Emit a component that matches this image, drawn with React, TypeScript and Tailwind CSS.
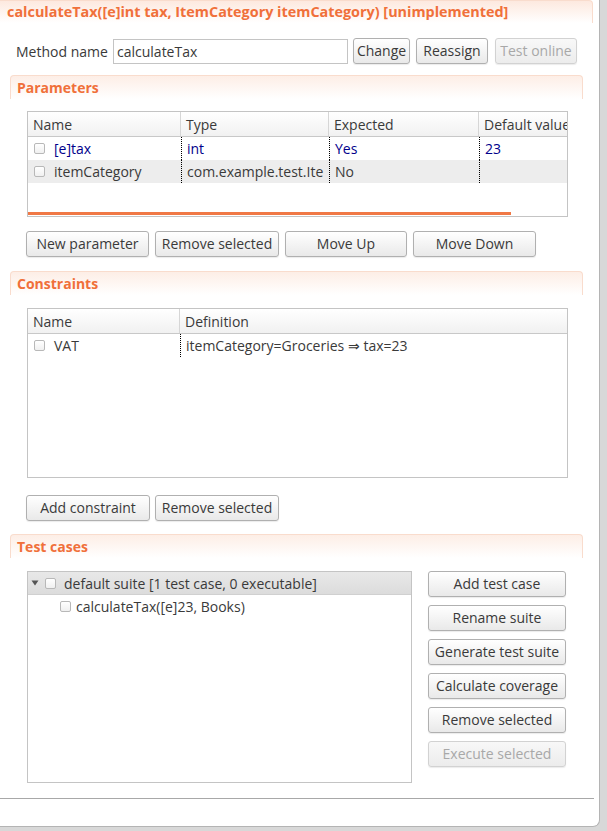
import React from "react";

const FONT = { fontFamily: '"Open Sans", "Noto Sans", sans-serif' };

function Btn({ children, w, disabled }: { children: React.ReactNode; w: string; disabled?: boolean }) {
  return (
    <div
      className={`${w} h-[26px] flex items-center justify-center rounded-[3px] border text-[14px] leading-none whitespace-nowrap shadow-[0_1px_1px_rgba(0,0,0,0.08)] ${
        disabled
          ? "border-[#d2d2d2] text-[#a8a8a8] bg-gradient-to-b from-[#f8f8f8] to-[#ececec]"
          : "border-[#b0b0b0] text-[#3a3a3a] bg-gradient-to-b from-white to-[#e9e9e9]"
      }`}
    >
      {children}
    </div>
  );
}

function SectionHeader({ title }: { title: string }) {
  return (
    <div className="h-[24px] rounded-t-[4px] border-t border-l border-r border-[#f9dccd] bg-gradient-to-b from-[#fdeee6] to-white flex items-center pl-[6px] text-[14px] font-bold text-[#f0703a]">
      {title}
    </div>
  );
}

function Check() {
  return <div className="w-[11px] h-[11px] rounded-[2px] border border-[#b8b8b8] bg-gradient-to-b from-white to-[#f0f0f0] shrink-0" />;
}

function HeadCell({ children, w, last }: { children: React.ReactNode; w: string; last?: boolean }) {
  return (
    <div className={`${w} shrink-0 h-full flex items-center pl-[5px] ${last ? "" : "border-r border-[#d6d6d6]"} overflow-hidden whitespace-nowrap`}>
      {children}
    </div>
  );
}

function Cell({ children, w, sep, cls }: { children?: React.ReactNode; w: string; sep?: boolean; cls?: string }) {
  return (
    <div className={`${w} shrink-0 h-full flex items-center overflow-hidden whitespace-nowrap ${sep ? "border-l border-dotted border-black pl-[5px]" : ""} ${cls ?? ""}`}>
      {children}
    </div>
  );
}

export default function App() {
  return (
    <div className="w-[607px] h-[831px] bg-[#d8d8d8] text-[14px] text-[#3a3a3a]" style={FONT}>
      <div className="w-[600px] h-[827px] bg-white border-r border-b border-[#b4b4b4] rounded-br-[7px] flex flex-col">
        {/* Title */}
        <div className="w-[593px] h-[23px] rounded-tr-[4px] border-t border-r border-[#f9dccd] bg-gradient-to-b from-[#fde9df] to-white flex items-center pl-[7px] text-[14.4px] font-bold text-[#f0703a] whitespace-nowrap">
          calculateTax([e]int tax, ItemCategory itemCategory) [unimplemented]
        </div>

        {/* Method name row */}
        <div className="mt-[15px] h-[26px] flex items-center pl-[16px]">
          <span className="w-[97px] shrink-0">Method name</span>
          <div className="w-[235px] h-[25px] border border-[#c4c4c4] flex items-center pl-[3px] bg-white">calculateTax</div>
          <div className="ml-[5px]"><Btn w="w-[57px]">Change</Btn></div>
          <div className="ml-[6px]"><Btn w="w-[72px]">Reassign</Btn></div>
          <div className="ml-[7px]"><Btn w="w-[82px]" disabled>Test online</Btn></div>
        </div>

        {/* Parameters */}
        <div className="ml-[10px] w-[573px] mt-[11px]">
          <SectionHeader title="Parameters" />
        </div>
        <div className="ml-[27px] mt-[12px] w-[541px] h-[106px] border border-[#c4c4c4] flex flex-col relative">
          <div className="h-[25px] flex border-b border-[#c8c8c8] bg-gradient-to-b from-white to-[#f1f1f1]">
            <HeadCell w="w-[153px]">Name</HeadCell>
            <HeadCell w="w-[148px]">Type</HeadCell>
            <HeadCell w="w-[150px]">Expected</HeadCell>
            <HeadCell w="w-[88px]" last>Default value</HeadCell>
          </div>
          <div className="h-[23px] flex text-[#00008b]">
            <Cell w="w-[153px]" cls="pl-[6px] gap-[9px]"><Check />[e]tax</Cell>
            <Cell w="w-[148px]" sep>int</Cell>
            <Cell w="w-[150px]" sep>Yes</Cell>
            <Cell w="w-[88px]" sep>23</Cell>
          </div>
          <div className="h-[23px] flex bg-[#ededed]">
            <Cell w="w-[153px]" cls="pl-[6px] gap-[9px]"><Check />itemCategory</Cell>
            <Cell w="w-[148px]" sep>com.example.test.Ite</Cell>
            <Cell w="w-[150px]" sep>No</Cell>
            <Cell w="w-[88px]" sep></Cell>
          </div>
          <div className="absolute left-0 bottom-[1px] w-[483px] h-[3px] bg-[#f07845]" />
        </div>
        <div className="ml-[26px] mt-[14px] flex gap-[6px]">
          <Btn w="w-[123px]">New parameter</Btn>
          <Btn w="w-[124px]">Remove selected</Btn>
          <Btn w="w-[122px]">Move Up</Btn>
          <Btn w="w-[123px]">Move Down</Btn>
        </div>

        {/* Constraints */}
        <div className="ml-[10px] w-[573px] mt-[14px]">
          <SectionHeader title="Constraints" />
        </div>
        <div className="ml-[27px] mt-[13px] w-[541px] h-[170px] border border-[#c4c4c4] flex flex-col">
          <div className="h-[25px] flex border-b border-[#c8c8c8] bg-gradient-to-b from-white to-[#f1f1f1]">
            <HeadCell w="w-[152px]">Name</HeadCell>
            <HeadCell w="w-[387px]" last>Definition</HeadCell>
          </div>
          <div className="h-[23px] flex">
            <Cell w="w-[152px]" cls="pl-[6px] gap-[9px]"><Check />VAT</Cell>
            <Cell w="w-[387px]" sep>itemCategory=Groceries ⇒ tax=23</Cell>
          </div>
        </div>
        <div className="ml-[26px] mt-[17px] flex gap-[5px]">
          <Btn w="w-[124px]">Add constraint</Btn>
          <Btn w="w-[124px]">Remove selected</Btn>
        </div>

        {/* Test cases */}
        <div className="ml-[10px] w-[573px] mt-[13px]">
          <SectionHeader title="Test cases" />
        </div>
        <div className="ml-[27px] mt-[13px] flex items-start">
          <div className="w-[385px] h-[212px] border border-[#c4c4c4] flex flex-col">
            <div className="h-[23px] flex items-center bg-gradient-to-b from-[#e8e8e8] to-[#dcdcdc] border-b border-[#d0d0d0] pl-[3px]">
              <svg width="8" height="8" viewBox="0 0 8 8" className="shrink-0"><path d="M0.5 1.5 L7.5 1.5 L4 6.5 Z" fill="#555" /></svg>
              <div className="ml-[6px]"><Check /></div>
              <span className="ml-[8px] whitespace-nowrap">default suite [1 test case, 0 executable]</span>
            </div>
            <div className="h-[23px] flex items-center pl-[32px]">
              <Check />
              <span className="ml-[5px] whitespace-nowrap">calculateTax([e]23, Books)</span>
            </div>
          </div>
          <div className="ml-[16px] flex flex-col gap-[8px]">
            <Btn w="w-[138px]">Add test case</Btn>
            <Btn w="w-[138px]">Rename suite</Btn>
            <Btn w="w-[138px]">Generate test suite</Btn>
            <Btn w="w-[138px]">Calculate coverage</Btn>
            <Btn w="w-[138px]">Remove selected</Btn>
            <Btn w="w-[138px]" disabled>Execute selected</Btn>
          </div>
        </div>

        <div className="mt-[15px] w-[594px] h-px bg-[#a8a8a8]" />
      </div>
    </div>
  );
}
